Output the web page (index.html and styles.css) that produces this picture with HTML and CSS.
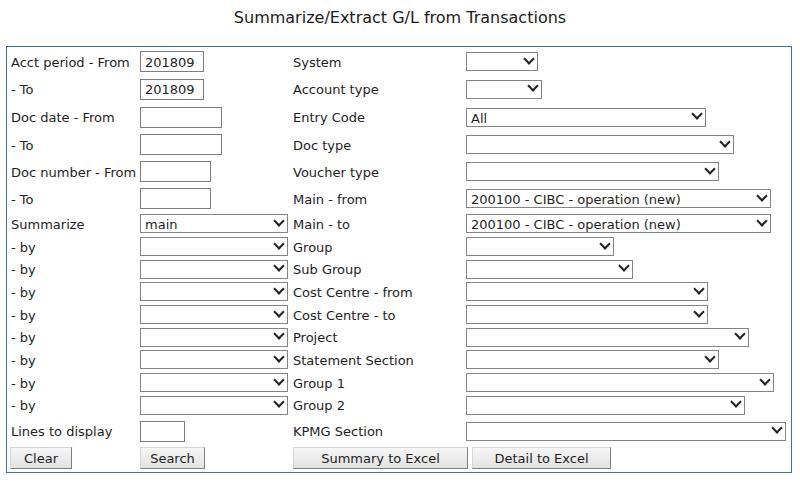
FILE: index.html
```html
<!DOCTYPE html>
<html>
<head>
<meta charset="utf-8">
<title>Summarize/Extract G/L from Transactions</title>
<link rel="stylesheet" href="styles.css">
</head>
<body>
<h1 class="title">Summarize/Extract G/L from Transactions</h1>
<form class="box">
  <label class="lbl">Acct period - From</label>
  <div class="cell"><input class="txt w64" type="text" value="201809"></div>
  <label class="lbl">System</label>
  <div class="cell"><span class="sel w72"><select></select></span></div>

  <label class="lbl">- To</label>
  <div class="cell"><input class="txt w64" type="text" value="201809"></div>
  <label class="lbl">Account type</label>
  <div class="cell"><span class="sel w76"><select></select></span></div>

  <label class="lbl">Doc date - From</label>
  <div class="cell"><input class="txt w82" type="text"></div>
  <label class="lbl">Entry Code</label>
  <div class="cell"><span class="sel w240"><select><option>All</option></select></span></div>

  <label class="lbl">- To</label>
  <div class="cell"><input class="txt w82" type="text"></div>
  <label class="lbl">Doc type</label>
  <div class="cell"><span class="sel w268"><select></select></span></div>

  <label class="lbl">Doc number - From</label>
  <div class="cell"><input class="txt w71" type="text"></div>
  <label class="lbl">Voucher type</label>
  <div class="cell"><span class="sel w253"><select></select></span></div>

  <label class="lbl">- To</label>
  <div class="cell"><input class="txt w71" type="text"></div>
  <label class="lbl">Main - from</label>
  <div class="cell"><span class="sel w305"><select><option>200100 - CIBC - operation (new)</option></select></span></div>

  <label class="lbl">Summarize</label>
  <div class="cell"><span class="sel w148"><select><option>main</option></select></span></div>
  <label class="lbl">Main - to</label>
  <div class="cell"><span class="sel w305"><select><option>200100 - CIBC - operation (new)</option></select></span></div>

  <label class="lbl">- by</label>
  <div class="cell"><span class="sel w148"><select></select></span></div>
  <label class="lbl">Group</label>
  <div class="cell"><span class="sel w148"><select></select></span></div>

  <label class="lbl">- by</label>
  <div class="cell"><span class="sel w148"><select></select></span></div>
  <label class="lbl">Sub Group</label>
  <div class="cell"><span class="sel w167"><select></select></span></div>

  <label class="lbl">- by</label>
  <div class="cell"><span class="sel w148"><select></select></span></div>
  <label class="lbl">Cost Centre - from</label>
  <div class="cell"><span class="sel w242"><select></select></span></div>

  <label class="lbl">- by</label>
  <div class="cell"><span class="sel w148"><select></select></span></div>
  <label class="lbl">Cost Centre - to</label>
  <div class="cell"><span class="sel w242"><select></select></span></div>

  <label class="lbl">- by</label>
  <div class="cell"><span class="sel w148"><select></select></span></div>
  <label class="lbl">Project</label>
  <div class="cell"><span class="sel w283"><select></select></span></div>

  <label class="lbl">- by</label>
  <div class="cell"><span class="sel w148"><select></select></span></div>
  <label class="lbl">Statement Section</label>
  <div class="cell"><span class="sel w253"><select></select></span></div>

  <label class="lbl">- by</label>
  <div class="cell"><span class="sel w148"><select></select></span></div>
  <label class="lbl">Group 1</label>
  <div class="cell"><span class="sel w308"><select></select></span></div>

  <label class="lbl">- by</label>
  <div class="cell"><span class="sel w148"><select></select></span></div>
  <label class="lbl">Group 2</label>
  <div class="cell"><span class="sel w279"><select></select></span></div>

  <label class="lbl">Lines to display</label>
  <div class="cell"><input class="txt w45" type="text"></div>
  <label class="lbl">KPMG Section</label>
  <div class="cell"><span class="sel w320"><select></select></span></div>

  <div class="cell"><button type="button" class="btn b62">Clear</button></div>
  <div class="cell"><button type="button" class="btn b65">Search</button></div>
  <div class="cell span2">
    <button type="button" class="btn b175">Summary to Excel</button>
    <button type="button" class="btn b139">Detail to Excel</button>
  </div>
</form>
</body>
</html>
```
FILE: styles.css
```css
html, body {
  margin: 0;
  padding: 0;
  background: #ffffff;
}
body {
  font-family: "DejaVu Sans", Verdana, sans-serif;
  font-size: 13px;
  color: #1e1e1e;
  width: 800px;
  height: 486px;
  overflow: hidden;
}
.title {
  margin: 0;
  padding-top: 8px;
  height: 38px;
  line-height: 20px;
  font-size: 16px;
  font-weight: normal;
  text-align: center;
  color: #1a1a1a;
}
.box {
  box-sizing: border-box;
  margin: 0 0 0 6px;
  width: 786px;
  height: 427px;
  border: 1px solid #3f7590;
  padding: 1px 0 3px 4px;
  display: grid;
  grid-template-columns: 129px 153px 173px 1fr;
  grid-template-rows: 27px 28px 28px 27px 27px 27px 23px 23px 22px 23px 23px 22px 23px 23px 22px 30px 23px;
  align-items: center;
}
.lbl {
  white-space: nowrap;
  line-height: 16px;
  padding-top: 2px;
}
.cell {
  display: flex;
  align-items: center;
  height: 100%;
}
.span2 {
  grid-column: 3 / span 2;
  gap: 4px;
}
.txt {
  box-sizing: border-box;
  height: 21px;
  margin: 0;
  padding: 1px 4px 0;
  border: 1px solid #7d7d7d;
  font: 13px "DejaVu Sans", Verdana, sans-serif;
  color: #1e1e1e;
  background: #fff;
  outline: none;
}
.w64 { width: 64px; }
.w82 { width: 82px; }
.w71 { width: 71px; }
.w45 { width: 45px; }
.sel {
  position: relative;
  display: block;
  height: 19px;
}
.sel select {
  -webkit-appearance: none;
  appearance: none;
  box-sizing: border-box;
  display: block;
  width: 100%;
  height: 19px;
  margin: 0;
  padding: 2px 20px 0 4px;
  border: 1px solid #858585;
  border-radius: 0;
  background: #fff;
  font: 13px "DejaVu Sans", Verdana, sans-serif;
  color: #1e1e1e;
  outline: none;
}
.sel::after {
  content: "";
  position: absolute;
  right: 5px;
  top: 50%;
  width: 6px;
  height: 6px;
  margin-top: -7px;
  border-right: 2px solid #222;
  border-bottom: 2px solid #222;
  transform: rotate(45deg);
  pointer-events: none;
}
.w72 { width: 72px; }
.w76 { width: 76px; }
.w148 { width: 148px; }
.w167 { width: 167px; }
.w240 { width: 240px; }
.w242 { width: 242px; }
.w253 { width: 253px; }
.w268 { width: 268px; }
.w279 { width: 279px; }
.w283 { width: 283px; }
.w305 { width: 305px; }
.w308 { width: 308px; }
.w320 { width: 320px; }
.btn {
  box-sizing: border-box;
  height: 22px;
  margin: 0;
  padding: 1px 0 0;
  border: 1px solid;
  border-color: #d6d6d6 #7f7f7f #7f7f7f #d6d6d6;
  background: linear-gradient(#f6f6f6, #e2e2e2);
  font: 13px "DejaVu Sans", Verdana, sans-serif;
  color: #1e1e1e;
  text-align: center;
}
.b62 { width: 62px; margin-left: -1px; }
.b65 { width: 65px; }
.b175 { width: 175px; }
.b139 { width: 139px; }
```
